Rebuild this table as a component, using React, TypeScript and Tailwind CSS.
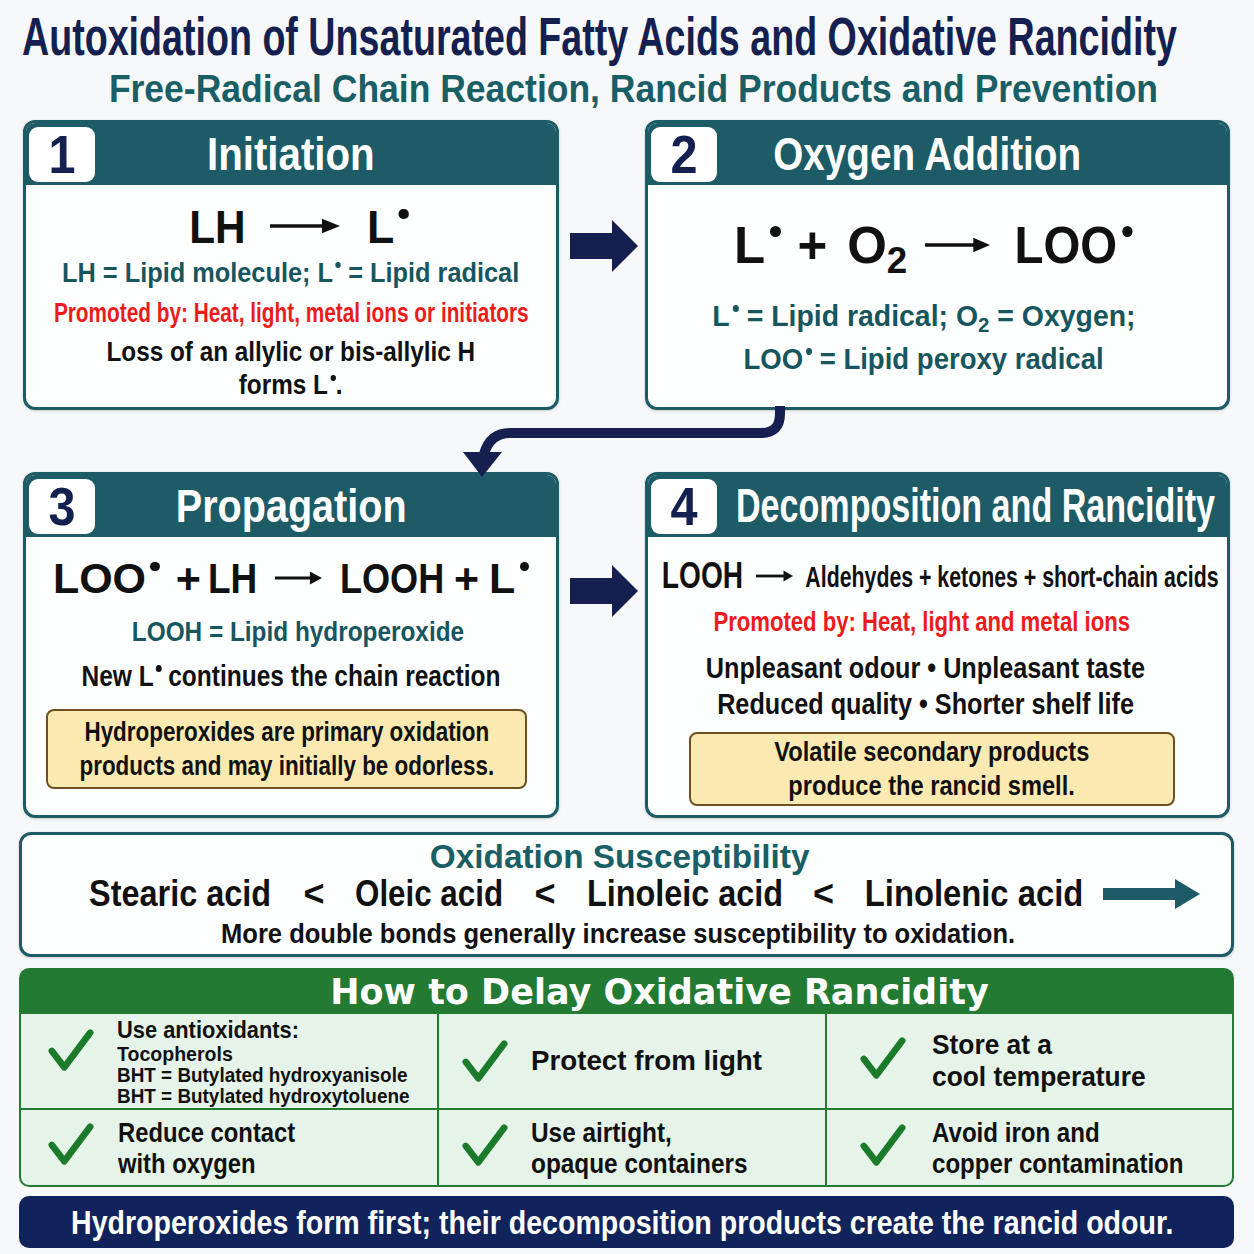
import type { ReactNode } from "react";

const SANS = "font-['Liberation_Sans','Arial',sans-serif]";
const WIDE = "font-['DejaVu_Sans','Verdana',sans-serif]";

function Rad() {
  return <span className="relative -top-[0.5em] ml-[0.1em] inline-block size-[0.22em] rounded-full bg-current" />;
}

function Sub2() {
  return <span className="relative top-[0.28em] text-[0.72em]">2</span>;
}

// one line of text, squeezed horizontally to the reference width
function S({ s, children }: { s: string; children: ReactNode }) {
  return <span className={"inline-block whitespace-nowrap " + s}>{children}</span>;
}

function Fit({ w, s, children }: { w: string; s: string; children: ReactNode }) {
  return (
    <span className={"inline-flex shrink-0 justify-center " + w}>
      <span className={"inline-block whitespace-nowrap " + s}>{children}</span>
    </span>
  );
}

function EqArrow({ className }: { className: string }) {
  return (
    <svg viewBox="0 0 70 20" preserveAspectRatio="none" className={"shrink-0 " + className}>
      <line x1="0" y1="10" x2="58" y2="10" stroke="currentColor" strokeWidth="4" />
      <polygon points="52,2 70,10 52,18" fill="currentColor" />
    </svg>
  );
}

function BlockArrow({ className }: { className?: string }) {
  return (
    <svg viewBox="0 0 68 52" className={className}>
      <polygon points="0,13 42,13 42,0 68,26 42,52 42,39 0,39" fill="currentColor" />
    </svg>
  );
}

function Check({ className }: { className?: string }) {
  return (
    <svg viewBox="0 0 48 46" className={"h-[44px] w-[46px] shrink-0 text-[#1c7a2b] " + (className ?? "")}>
      <polyline
        points="4,24 17,41 44,5"
        fill="none"
        stroke="currentColor"
        strokeWidth="7"
        strokeLinecap="round"
        strokeLinejoin="round"
      />
    </svg>
  );
}

function Card({
  num,
  title,
  children,
  wide,
}: {
  num: string;
  title: ReactNode;
  children: ReactNode;
  wide?: boolean;
}) {
  return (
    <div className="flex h-full flex-col overflow-hidden rounded-[12px] border-[3px] border-[#1d5b66] bg-[#fdfefe] shadow-[0_1px_3px_rgba(0,0,0,0.18)]">
      <div
        className={
          wide
            ? "flex h-[62px] shrink-0 items-center gap-[19px] bg-[#1d5b66] px-[3px]"
            : "grid h-[62px] shrink-0 grid-cols-[66px_1fr_66px] items-center bg-[#1d5b66] px-[3px]"
        }
      >
        <div className="flex h-[55px] w-[66px] shrink-0 items-center justify-center rounded-[9px] bg-white text-[54px] leading-none text-[#14204f]">
          <S s="scale-x-[0.9]">{num}</S>
        </div>
        <div className={wide ? "text-[48px] leading-none text-white" : "text-center text-[46px] leading-none text-white"}>
          {title}
        </div>
      </div>
      <div className="flex flex-1 flex-col items-center text-center">{children}</div>
    </div>
  );
}

function Note({ children, className }: { children: ReactNode; className?: string }) {
  return (
    <div
      className={
        "flex flex-col items-center justify-center rounded-[8px] border-2 border-[#6e5020] bg-[#fbe9b2] text-[27px] leading-[34px] text-[#111] " +
        (className ?? "")
      }
    >
      {children}
    </div>
  );
}

function Cell({ children, className }: { children: ReactNode; className?: string }) {
  return <div className={"flex items-center bg-[#e6f3e8] " + (className ?? "")}>{children}</div>;
}

export default function App() {
  return (
    <div className={`h-[1254px] w-[1254px] overflow-hidden bg-[#f6f8f9] font-bold ${SANS}`}>
      {/* Titles */}
      <div className="pl-[22px] pt-[8px]">
        <div className="origin-left scale-x-[0.71] whitespace-nowrap text-[53px] leading-[58px] text-[#151f50]">
          Autoxidation of Unsaturated Fatty Acids and Oxidative Rancidity
        </div>
      </div>
      <div className="flex justify-center pl-[12px]">
        <S s="scale-x-[0.91] text-[39px] leading-[46px] text-[#1a5e66]">
          Free-Radical Chain Reaction, Rancid Products and Prevention
        </S>
      </div>

      {/* Steps */}
      <div className="relative ml-[23px] mt-[8px] grid grid-cols-[536px_86px_585px] grid-rows-[290px_62px_346px]">
        <Card num="1" title={<S s="scale-x-[0.875]">Initiation</S>}>
          <div className="ml-[18px] mt-[18px] flex h-[46px] items-center text-[47px] leading-none text-[#111]">
            <Fit w="w-[55px]" s="scale-x-[0.9]">LH</Fit>
            <EqArrow className="ml-[25px] mr-[26px] h-[18px] w-[70px]" />
            <Fit w="w-[44px]" s="scale-x-[0.95]">
              L<Rad />
            </Fit>
          </div>
          <div className="mt-[7px] text-[28px] leading-[34px] text-[#17565f]">
            <S s="scale-x-[0.905]">
              LH = Lipid molecule; L<Rad /> = Lipid radical
            </S>
          </div>
          <div className="mt-[6px] text-[27px] leading-[34px] text-[#ee1b1b]">
            <S s="scale-x-[0.77]">Promoted by: Heat, light, metal ions or initiators</S>
          </div>
          <div className="mt-[6px] flex flex-col items-center text-[27px] leading-[33px] text-[#111]">
            <S s="scale-x-[0.9]">Loss of an allylic or bis-allylic H</S>
            <S s="scale-x-[0.9]">
              forms L<Rad />.
            </S>
          </div>
        </Card>

        <div className="ml-[11px] mt-[100px]">
          <BlockArrow className="h-[52px] w-[68px] text-[#152050]" />
        </div>

        <Card num="2" title={<S s="ml-[-20px] scale-x-[0.84]">Oxygen Addition</S>}>
          <div className="ml-[-4px] mt-[35px] flex h-[50px] items-center text-[51px] leading-none text-[#111]">
            <S s="">
              L<Rad />
            </S>
            <span className="ml-[16px]">+</span>
            <S s="ml-[20px]">
              O<Sub2 />
            </S>
            <EqArrow className="ml-[18px] mr-[20px] h-[18px] w-[65px]" />
            <S s="scale-x-[0.93]">
              LOO<Rad />
            </S>
          </div>
          <div className="ml-[-28px] mt-[26px] flex flex-col items-center text-[29px] leading-[41px] text-[#17565f]">
            <S s="scale-x-[0.98]">
              L<Rad /> = Lipid radical; O<Sub2 /> = Oxygen;
            </S>
            <S s="scale-x-[0.95]">
              LOO<Rad /> = Lipid peroxy radical
            </S>
          </div>
        </Card>

        <div className="col-span-3" />

        <Card num="3" title={<S s="scale-x-[0.86]">Propagation</S>}>
          <div className="mt-[20px] flex h-[42px] items-center text-[43px] leading-none text-[#111]">
            <S s="">
              LOO<Rad />
            </S>
            <span className="ml-[16px]">+</span>
            <Fit w="ml-[8px] w-[48px]" s="scale-x-[0.86]">LH</Fit>
            <EqArrow className="ml-[18px] mr-[18px] h-[16px] w-[47px]" />
            <Fit w="w-[104px]" s="scale-x-[0.84]">LOOH</Fit>
            <span className="ml-[10px]">+</span>
            <S s="ml-[10px]">
              L<Rad />
            </S>
          </div>
          <div className="ml-[14px] mt-[16px] text-[28px] leading-[34px] text-[#17565f]">
            <S s="scale-x-[0.87]">LOOH = Lipid hydroperoxide</S>
          </div>
          <div className="mt-[10px] text-[29px] leading-[34px] text-[#111]">
            <S s="scale-x-[0.845]">
              New L<Rad /> continues the chain reaction
            </S>
          </div>
          <Note className="ml-[-9px] mt-[16px] h-[80px] w-[481px]">
            <S s="scale-x-[0.83]">Hydroperoxides are primary oxidation</S>
            <S s="scale-x-[0.83]">products and may initially be odorless.</S>
          </Note>
        </Card>

        <div className="ml-[11px] mt-[93px]">
          <BlockArrow className="h-[52px] w-[68px] text-[#152050]" />
        </div>

        <Card
          num="4"
          wide
          title={<S s="origin-left scale-x-[0.71]">Decomposition and Rancidity</S>}
        >
          <div className="ml-[8px] mt-[18px] flex h-[42px] items-center text-[#111]">
            <Fit w="w-[80px]" s="scale-x-[0.76] text-[37px]">LOOH</Fit>
            <EqArrow className="ml-[13px] mr-[10px] h-[14px] w-[37px]" />
            <Fit w="w-[418px]" s="scale-x-[0.71] text-[30px]">Aldehydes + ketones + short-chain acids</Fit>
          </div>
          <div className="ml-[-32px] mt-[8px] text-[28px] leading-[34px] text-[#ee1b1b]">
            <S s="scale-x-[0.79]">Promoted by: Heat, light and metal ions</S>
          </div>
          <div className="ml-[-24px] mt-[11px] flex flex-col items-center text-[29px] leading-[36px] text-[#111]">
            <S s="scale-x-[0.87]">Unpleasant odour • Unpleasant taste</S>
            <S s="scale-x-[0.87]">Reduced quality • Shorter shelf life</S>
          </div>
          <Note className="ml-[-11px] mt-[10px] h-[74px] w-[486px]">
            <S s="scale-x-[0.876]">Volatile secondary products</S>
            <S s="scale-x-[0.876]">produce the rancid smell.</S>
          </Note>
        </Card>

        {/* Curved connector from step 2 down to step 3 */}
        <svg viewBox="0 0 330 80" className="absolute left-[437px] top-[280px] h-[80px] w-[330px] text-[#152050]">
          <path d="M320 6 V14 Q320 33 301 33 H50 Q30 33 24 54" fill="none" stroke="currentColor" strokeWidth="10" />
          <polygon points="3,52 42,52 22,77" fill="currentColor" />
        </svg>
      </div>

      {/* Susceptibility */}
      <div className="ml-[19px] mt-[14px] flex h-[125px] w-[1215px] flex-col items-center rounded-[12px] border-[3px] border-[#1d5b66] bg-[#fdfefe] pt-[2px] shadow-[0_1px_3px_rgba(0,0,0,0.18)]">
        <div className="ml-[-14px] text-[34px] leading-[38px] text-[#1a5e66]">
          <S s="scale-x-[0.98]">Oxidation Susceptibility</S>
        </div>
        <div className="-mt-[2px] flex h-[42px] items-center self-start pl-[67px] text-[36px] leading-none text-[#111]">
          <Fit w="w-[183px]" s="scale-x-[0.9]">Stearic acid</Fit>
          <Fit w="w-[84px]" s="">&lt;</Fit>
          <Fit w="w-[146px]" s="scale-x-[0.87]">Oleic acid</Fit>
          <Fit w="w-[86px]" s="">&lt;</Fit>
          <Fit w="w-[194px]" s="scale-x-[0.9]">Linoleic acid</Fit>
          <Fit w="w-[83px]" s="">&lt;</Fit>
          <Fit w="w-[218px]" s="scale-x-[0.91]">Linolenic acid</Fit>
          <svg viewBox="0 0 97 30" className="ml-[20px] h-[30px] w-[97px] text-[#1d5b66]">
            <polygon points="0,9 72,9 72,0 97,15 72,30 72,21 0,21" fill="currentColor" />
          </svg>
        </div>
        <div className="ml-[-16px] mt-[2px] text-[27px] leading-[34px] text-[#111]">
          <S s="scale-x-[0.945]">More double bonds generally increase susceptibility to oxidation.</S>
        </div>
      </div>

      {/* Prevention table */}
      <div className="ml-[19px] mt-[11px] w-[1215px] overflow-hidden rounded-[10px] border-2 border-[#237a33] bg-[#237a33]">
        <div className={`flex h-[44px] items-center justify-center pl-[66px] text-[35px] leading-none text-white ${WIDE}`}>
          How to Delay Oxidative Rancidity
        </div>
        <div className="grid grid-cols-[416px_386px_1fr] grid-rows-[94px_75px] gap-[2px] text-[#111]">
          <Cell className="gap-[23px] pl-[27px]">
            <Check className="mb-[22px]" />
            <div className="flex flex-col items-start">
              <S s="origin-left scale-x-[0.91] text-[24px] leading-[27px]">Use antioxidants:</S>
              <S s="origin-left scale-x-[0.93] text-[21px] leading-[21px]">Tocopherols</S>
              <S s="origin-left scale-x-[0.9] text-[21px] leading-[21px]">BHT = Butylated hydroxyanisole</S>
              <S s="origin-left scale-x-[0.9] text-[21px] leading-[21px]">BHT = Butylated hydroxytoluene</S>
            </div>
          </Cell>
          <Cell className="gap-[23px] pl-[23px]">
            <Check />
            <S s="origin-left scale-x-[0.99] text-[28px] leading-[32px]">Protect from light</S>
          </Cell>
          <Cell className="gap-[26px] pl-[33px]">
            <Check className="mb-[6px]" />
            <div className="flex flex-col items-start text-[28px] leading-[32px]">
              <S s="origin-left scale-x-[0.94]">Store at a</S>
              <S s="origin-left scale-x-[0.94]">cool temperature</S>
            </div>
          </Cell>
          <Cell className="gap-[24px] pl-[27px]">
            <Check className="mb-[8px]" />
            <div className="flex flex-col items-start text-[28px] leading-[31px]">
              <S s="origin-left scale-x-[0.85]">Reduce contact</S>
              <S s="origin-left scale-x-[0.85]">with oxygen</S>
            </div>
          </Cell>
          <Cell className="gap-[23px] pl-[23px]">
            <Check className="mb-[6px]" />
            <div className="flex flex-col items-start text-[28px] leading-[31px]">
              <S s="origin-left scale-x-[0.87]">Use airtight,</S>
              <S s="origin-left scale-x-[0.87]">opaque containers</S>
            </div>
          </Cell>
          <Cell className="gap-[26px] pl-[33px]">
            <Check className="mb-[6px]" />
            <div className="flex flex-col items-start text-[28px] leading-[31px]">
              <S s="origin-left scale-x-[0.86]">Avoid iron and</S>
              <S s="origin-left scale-x-[0.86]">copper contamination</S>
            </div>
          </Cell>
        </div>
      </div>

      {/* Footer */}
      <div className="ml-[19px] mt-[9px] flex h-[52px] w-[1215px] items-center justify-center rounded-[10px] bg-[#10235a] text-[33px] leading-none text-white">
        <S s="ml-[-8px] scale-x-[0.865]">Hydroperoxides form first; their decomposition products create the rancid odour.</S>
      </div>
    </div>
  );
}
